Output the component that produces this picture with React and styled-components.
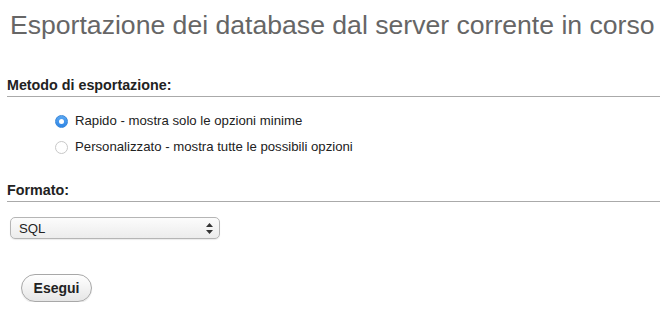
import React from 'react';
import styled, { createGlobalStyle } from 'styled-components';

const GlobalStyle = createGlobalStyle`
  body {
    margin: 0;
    background: #fff;
    font-family: "Liberation Sans", Arial, sans-serif;
    color: #111;
  }
`;

const Page = styled.div`
  padding: 0 0 0 7px;
`;

const Title = styled.h2`
  margin: 0;
  padding: 10px 0 0 3px;
  font-size: 26.6px;
  font-weight: normal;
  color: #666;
  line-height: 30px;
`;

const Fieldset = styled.div`
  margin-top: ${props => props.top}px;
`;

const Legend = styled.h3`
  margin: 0;
  font-size: 14.3px;
  font-weight: bold;
  color: #222;
  line-height: 16px;
  padding-bottom: 3px;
  border-bottom: 1px solid #aaa;
`;

const Options = styled.ul`
  list-style: none;
  margin: 0;
  padding: 10px 0 0 48px;
`;

const Option = styled.li`
  display: flex;
  align-items: center;
  gap: 7px;
  height: 26px;
  font-size: 13.2px;
  color: #222;
`;

const Radio = styled.span`
  width: 13px;
  height: 13px;
  border-radius: 50%;
  box-sizing: border-box;
  margin-top: 3px;
  display: flex;
  align-items: center;
  justify-content: center;
  ${props => props.checked
    ? `background: linear-gradient(#5aa7f2, #2f86e6); border: 1px solid #3a87d8;`
    : `background: #fff; border: 1px solid #c8c8c8;`}

  &::after {
    content: '';
    width: 5px;
    height: 5px;
    border-radius: 50%;
    background: ${props => (props.checked ? '#fff' : 'transparent')};
  }
`;

const Select = styled.div`
  margin: 15px 0 0 3px;
  width: 210px;
  height: 22px;
  box-sizing: border-box;
  border: 1px solid #b5b5b5;
  border-radius: 5px;
  background: linear-gradient(#fcfcfc, #ececec);
  box-shadow: 0 1px 1px rgba(0, 0, 0, 0.08);
  display: flex;
  align-items: center;
  justify-content: space-between;
  padding: 0 6px 0 8px;
  font-size: 13.2px;
  color: #222;
`;

const Arrows = styled.svg`
  width: 7px;
  height: 11px;
`;

const Button = styled.button`
  margin: 35px 0 0 14px;
  width: 71px;
  height: 28px;
  border: 1px solid #a8a8a8;
  border-radius: 14px;
  background: linear-gradient(#ffffff, #e6e6e6);
  box-shadow: 0 1px 1px rgba(0, 0, 0, 0.1);
  font-family: "Liberation Sans", Arial, sans-serif;
  font-size: 14px;
  font-weight: bold;
  color: #222;
  padding: 0;
`;

const App = () => (
  <Page>
    <GlobalStyle />
    <Title>Esportazione dei database dal server corrente in corso</Title>

    <Fieldset top={37}>
      <Legend>Metodo di esportazione:</Legend>
      <Options>
        <Option>
          <Radio checked />
          Rapido - mostra solo le opzioni minime
        </Option>
        <Option>
          <Radio />
          Personalizzato - mostra tutte le possibili opzioni
        </Option>
      </Options>
    </Fieldset>

    <Fieldset top={23}>
      <Legend>Formato:</Legend>
      <Select>
        SQL
        <Arrows viewBox="0 0 7 11">
          <path d="M3.5 0 L7 4 H0 Z" fill="#333" />
          <path d="M3.5 11 L7 7 H0 Z" fill="#333" />
        </Arrows>
      </Select>
    </Fieldset>

    <Button>Esegui</Button>
  </Page>
);

export default App;
